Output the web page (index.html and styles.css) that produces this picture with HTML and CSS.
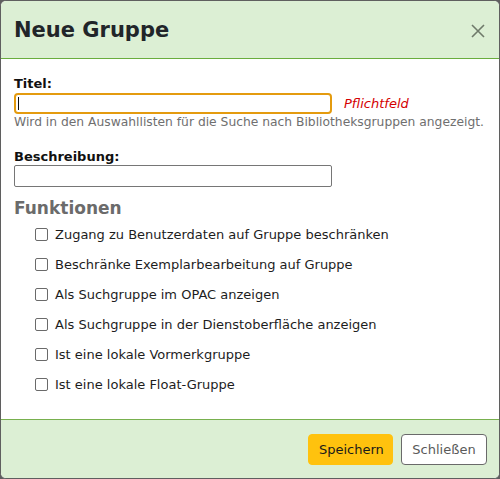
FILE: index.html
```html
<!DOCTYPE html>
<html lang="de">
<head>
<meta charset="utf-8">
<title>Neue Gruppe</title>
<link rel="stylesheet" href="styles.css">
</head>
<body>
<div class="modal">
  <header class="modal-header">
    <h1 class="modal-title">Neue Gruppe</h1>
    <button class="close" type="button" aria-label="Schließen">
      <svg width="14" height="14" viewBox="0 0 14 14"><path d="M1 1L13 13M13 1L1 13" stroke="#6f7a6a" stroke-width="1.6" fill="none"/></svg>
    </button>
  </header>
  <div class="modal-body">
    <div class="field">
      <label class="field-label" for="title">Titel:</label>
      <div class="input-row">
        <div id="title" class="text-input focused" role="textbox"><span class="caret"></span></div>
        <span class="required">Pflichtfeld</span>
      </div>
      <div class="hint">Wird in den Auswahllisten für die Suche nach Bibliotheksgruppen angezeigt.</div>
    </div>
    <div class="field field-desc">
      <label class="field-label" for="desc">Beschreibung:</label>
      <input id="desc" class="text-input" type="text">
    </div>
    <h2 class="section-title">Funktionen</h2>
    <ul class="options">
      <li><label><span class="box"></span>Zugang zu Benutzerdaten auf Gruppe beschränken</label></li>
      <li><label><span class="box"></span>Beschränke Exemplarbearbeitung auf Gruppe</label></li>
      <li><label><span class="box"></span>Als Suchgruppe im OPAC anzeigen</label></li>
      <li><label><span class="box"></span>Als Suchgruppe in der Dienstoberfläche anzeigen</label></li>
      <li><label><span class="box"></span>Ist eine lokale Vormerkgruppe</label></li>
      <li><label><span class="box"></span>Ist eine lokale Float-Gruppe</label></li>
    </ul>
  </div>
  <footer class="modal-footer">
    <button class="btn btn-primary" type="button">Speichern</button>
    <button class="btn btn-default" type="button">Schließen</button>
  </footer>
</div>
</body>
</html>
```
FILE: styles.css
```css
html, body {
  margin: 0;
  padding: 0;
  background: #5f5f5f;
}

body {
  font-family: "DejaVu Sans", sans-serif;
  color: #1d1d1d;
}

.modal {
  box-sizing: border-box;
  width: 500px;
  height: 479px;
  border: 1px solid #5f5f5f;
  border-radius: 6px;
  background: #ffffff;
  display: flex;
  flex-direction: column;
  overflow: hidden;
}

.modal-header {
  height: 57px;
  background: #dcefd4;
  border-bottom: 1px solid #6aad3e;
  display: flex;
  align-items: center;
  justify-content: space-between;
  padding: 0 14px 0 13px;
  flex-shrink: 0;
}

.modal-title {
  margin: 0;
  font-size: 21px;
  font-weight: bold;
  color: #212529;
  padding-top: 1px;
}

.close {
  border: 0;
  background: none;
  padding: 0;
  width: 14px;
  height: 14px;
  display: flex;
  margin-top: 2px;
  cursor: pointer;
}

.modal-body {
  flex: 1;
  padding: 16px 13px 0 13px;
  font-size: 13px;
}

.field-label {
  display: block;
  font-weight: bold;
  font-size: 13px;
  line-height: 17px;
  color: #111;
}

.input-row {
  display: flex;
  align-items: center;
  gap: 12px;
  margin-top: 1px;
}

.text-input {
  box-sizing: border-box;
  width: 318px;
  height: 21px;
  margin: 0;
  border: 1px solid #767676;
  border-radius: 2px;
  padding: 1px 3px;
  font-family: inherit;
  font-size: 13px;
  background: #fff;
}

.text-input.focused {
  border: 2px solid #e49b0f;
  border-radius: 4px;
  outline: none;
  height: 21px;
  display: flex;
  align-items: center;
  padding: 0 2px;
}

.caret {
  width: 1px;
  height: 13px;
  background: #111;
}

.required {
  color: #d40000;
  font-style: italic;
  font-size: 13px;
}

.hint {
  font-size: 12.3px;
  color: #6f6f6f;
  margin-top: 1px;
  line-height: 15px;
  white-space: nowrap;
}

.field-desc {
  margin-top: 18px;
}

.field-desc .text-input {
  height: 22px;
  margin-top: 0;
}

.section-title {
  margin: 11px 0 0 0;
  font-size: 17px;
  font-weight: bold;
  color: #6b6b6b;
  line-height: 21px;
}

.options {
  list-style: none;
  margin: 0;
  padding: 0 0 0 21px;
}

.options li {
  height: 30px;
  display: flex;
  align-items: center;
}

.options label {
  display: flex;
  align-items: center;
  font-size: 13px;
  color: #1d1d1d;
}

.box {
  box-sizing: border-box;
  width: 13px;
  height: 13px;
  border: 1px solid #6a6a6a;
  border-radius: 2px;
  background: #fff;
  margin-right: 7px;
}

.modal-footer {
  height: 58px;
  background: #dcefd4;
  border-top: 1px solid #78b04e;
  display: flex;
  align-items: center;
  justify-content: flex-end;
  gap: 8px;
  padding: 0 12px 0 0;
  flex-shrink: 0;
}

.btn {
  box-sizing: border-box;
  height: 31px;
  padding: 0 10px;
  font-family: inherit;
  font-size: 13px;
  border-radius: 4px;
  cursor: pointer;
}

.btn-primary {
  width: 85px;
  background: #ffc20e;
  border: 1px solid #ffc20e;
  color: #1a1a1a;
}

.btn-default {
  width: 86px;
  background: #fff;
  border: 1px solid #6a6a6a;
  color: #5a5a5a;
}
```
